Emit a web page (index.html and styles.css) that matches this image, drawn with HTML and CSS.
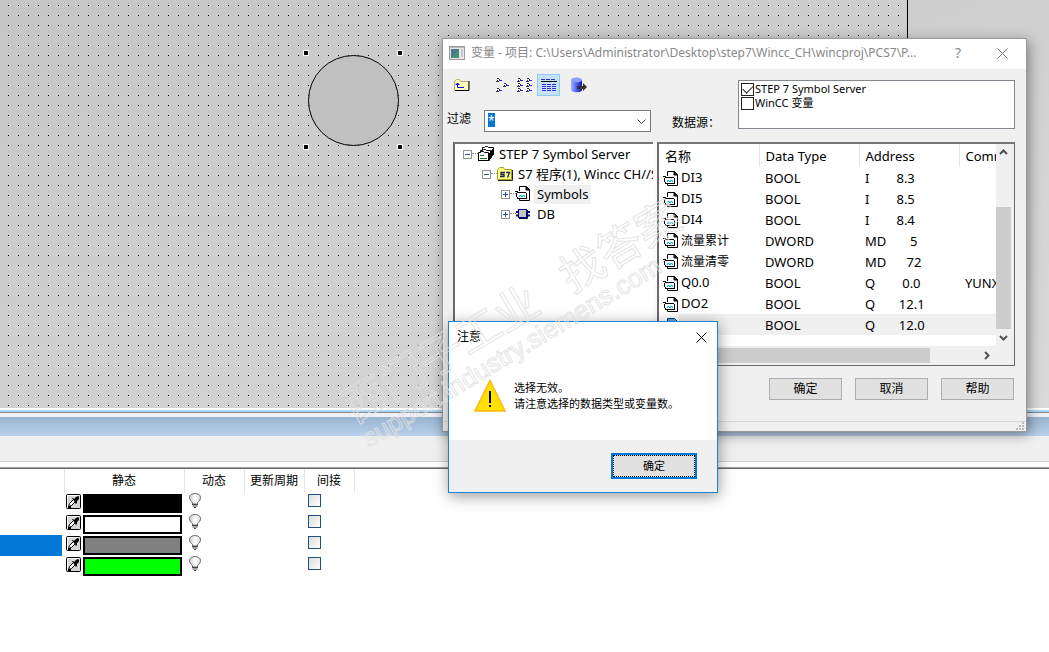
FILE: index.html
```html
<!DOCTYPE html>
<html lang="zh-CN">
<head>
<meta charset="utf-8">
<title>变量 - 项目</title>
<link rel="stylesheet" href="styles.css">
</head>
<body>
<svg class="defs" aria-hidden="true">
  <defs>
    <linearGradient id="bulb-fill" x1="0" x2="1"><stop offset="0" stop-color="#ccc"/><stop offset=".5" stop-color="#fff"/><stop offset="1" stop-color="#ddd"/></linearGradient>
    <linearGradient id="db-fill" x1="0" x2="1"><stop offset="0" stop-color="#a8b4ff"/><stop offset=".4" stop-color="#6070ff"/><stop offset="1" stop-color="#1010a0"/></linearGradient>
    <symbol id="doc" viewBox="0 0 16 16">
      <path d="M4.500 5V.5h7l3 3v11h-10V13" fill="#fff" stroke="#000"/>
      <path d="M11 .5v3.500h3.500z" fill="#333" stroke="#000"/>
      <path d="M1 5l2-1 1 2h7v6H4l-2-1z" fill="#fff"/>
      <path d="M0 5.500h2M2.500 5v1M2 6.500h9M11.500 7v5M3 12.500h9M1.500 7v4M2.500 11v2" fill="none" stroke="#000"/>
      <path d="M4.500 9.500h2M7.500 9.500h2M4 10.500h1M6 10.500h2M9 10.500h1" stroke="#00b0c0" fill="none"/>
    </symbol>
    <symbol id="picker" viewBox="0 0 15 15">
      <rect x=".5" y=".5" width="14" height="14" rx="1" fill="#d4d4d4" stroke="#000"/>
      <path d="M1.500 13V1.500H13" fill="none" stroke="#fff"/>
      <path d="M2.500 12.500l1-3 4-4 2 2-4 4z" fill="#fff" stroke="#000"/>
      <path d="M6 4h1l1 1 2-2 2-1 1 1v2l-2 2v2l-1 1z" fill="#000"/>
      <path d="M2 13h3" stroke="#000" stroke-width="2"/>
    </symbol>
    <symbol id="bulb" viewBox="0 0 14 16">
      <path d="M4.500 11V9.500C2.500 8 1.500 6.500 1.500 4.500 1.500 2 4 .6 7 .6s5.500 1.400 5.500 3.900c0 2-1 3.500-3 5V11z" fill="url(#bulb-fill)" stroke="#666"/>
      <path d="M4 11.500h6M4.500 13h5M6 14.500h2" stroke="#444" stroke-width="1.200"/>
    </symbol>
    <symbol id="branch" viewBox="0 0 6 5">
      <path d="M1 .5h2M3.500 1v2M0 3.500h3M1 2.500h1" stroke="#334" fill="none"/><path d="M4 2.500h2" stroke="#2020ff"/>
    </symbol>
    <symbol id="plus" viewBox="0 0 9 9">
      <rect x=".5" y=".5" width="8" height="8" fill="#fff" stroke="#919191"/><path d="M2 4.500h5M4.500 2v5" stroke="#2c4c9c"/>
    </symbol>
    <symbol id="minus" viewBox="0 0 9 9">
      <rect x=".5" y=".5" width="8" height="8" fill="#fff" stroke="#919191"/><path d="M2 4.500h5" stroke="#2c4c9c"/>
    </symbol>
  </defs>
</svg>

<main class="workspace">
  <section class="canvas" aria-label="画面">
    <div class="sheet"></div>
    <svg class="shape" viewBox="0 0 100 100">
      <circle cx="50.500" cy="50.500" r="45" fill="#c0c0c0" stroke="#000"/>
      <g fill="#000" stroke="#fff"><rect x=".5" y=".5" width="5" height="5"/><rect x="94.500" y=".5" width="5" height="5"/><rect x=".5" y="94.500" width="5" height="5"/><rect x="94.500" y="94.500" width="5" height="5"/></g>
    </svg>
  </section>
  <div class="frame-edge"></div>
  <div class="caption-bar"></div>
  <div class="property-bar"></div>
  <section class="properties">
    <table class="colors">
      <thead><tr><th class="c-name"></th><th class="c-static">静态</th><th class="c-dyn">动态</th><th class="c-cycle">更新周期</th><th class="c-ind">间接</th></tr></thead>
      <tbody>
        <tr><td></td><td><div class="static"><button class="pick" aria-label="选择颜色"><svg><use href="#picker"/></svg></button><span class="swatch black"></span></div></td><td><svg class="bulb"><use href="#bulb"/></svg></td><td></td><td><input class="tick" type="checkbox" aria-label="间接 1"></td></tr>
        <tr><td></td><td><div class="static"><button class="pick" aria-label="选择颜色"><svg><use href="#picker"/></svg></button><span class="swatch white"></span></div></td><td><svg class="bulb"><use href="#bulb"/></svg></td><td></td><td><input class="tick" type="checkbox" aria-label="间接 2"></td></tr>
        <tr><td><div class="selected-name"></div></td><td><div class="static"><button class="pick" aria-label="选择颜色"><svg><use href="#picker"/></svg></button><span class="swatch gray"></span></div></td><td><svg class="bulb"><use href="#bulb"/></svg></td><td></td><td><input class="tick" type="checkbox" aria-label="间接 3"></td></tr>
        <tr><td></td><td><div class="static"><button class="pick" aria-label="选择颜色"><svg><use href="#picker"/></svg></button><span class="swatch green"></span></div></td><td><svg class="bulb"><use href="#bulb"/></svg></td><td></td><td><input class="tick" type="checkbox" aria-label="间接 4"></td></tr>
      </tbody>
    </table>
  </section>
</main>

<section class="window" role="dialog" aria-labelledby="win-title">
  <header class="titlebar">
    <svg class="app-icon" viewBox="0 0 16 14"><rect x=".5" y=".5" width="15" height="13" fill="#e8e8e8" stroke="#999"/><path d="M1 1.500h14" stroke="#bbb"/><rect x="2" y="3" width="8" height="9" fill="#4c7890"/><path d="M2 12l8-9v9z" fill="#3f9078"/><path d="M12 4h2M12 6h2M12 8h2M12 10h2" stroke="#aaa"/></svg>
    <h1 id="win-title">变量 - 项目: C:\Users\Administrator\Desktop\step7\Wincc_CH\wincproj\PCS7\P...</h1>
    <button class="help" aria-label="帮助">?</button>
    <button class="close" aria-label="关闭"><svg viewBox="0 0 11 11"><path d="M.5 .5l10 10M10.500 .5l-10 10" stroke="#777"/></svg></button>
  </header>
  <div class="controls">
    <div class="left-controls">
      <div class="toolbar">
        <button aria-label="上一级"><svg viewBox="0 0 22 20"><path d="M3.500 15.500V6.500l2-2h3l1 2h8v9z" fill="#ffffc0" stroke="#c0b060"/><path d="M4 15.500h14V6" fill="none" stroke="#000"/><path d="M6.500 8v4.500H13M4.500 9.500h4M5.500 8.500h2" fill="none" stroke="#0000e0"/></svg></button>
        <button class="after-gap" aria-label="小图标"><svg viewBox="0 0 22 20"><use href="#branch" x="4" y="3" width="6" height="5"/><use href="#branch" x="11" y="8" width="6" height="5"/><use href="#branch" x="4" y="13" width="6" height="5"/></svg></button>
        <button aria-label="列表"><svg viewBox="0 0 22 20"><use href="#branch" x="2" y="3" width="6" height="5"/><use href="#branch" x="11" y="3" width="6" height="5"/><use href="#branch" x="2" y="8" width="6" height="5"/><use href="#branch" x="11" y="8" width="6" height="5"/><use href="#branch" x="2" y="13" width="6" height="5"/><use href="#branch" x="11" y="13" width="6" height="5"/></svg></button>
        <button class="pressed" aria-label="详细信息" aria-pressed="true"><svg viewBox="0 0 22 20"><path d="M3 4.500h15" stroke="#3030c0" stroke-dasharray="4 1"/><path d="M3 6.500h16" stroke="#000"/><path d="M4 9.500h15M4 11.500h15M4 13.500h15M4 15.500h15" stroke="#3030e0" stroke-dasharray="4 1"/></svg></button>
        <button class="after-db" aria-label="数据库"><svg viewBox="0 0 22 20"><path d="M3 5v10c0 3 11 3 11 0V5z" fill="url(#db-fill)"/><ellipse cx="8.500" cy="5" rx="5.500" ry="2.500" fill="#8c9cff"/><path d="M9 11h6V8l4 4-4 4v-2H9z" fill="#333"/></svg></button>
      </div>
      <div class="filter">
        <label for="filter">过滤</label>
        <div class="combo"><input id="filter" type="text" value="" aria-label="过滤"><span class="picked">*</span><svg viewBox="0 0 9 6"><path d="M.5 .5l4 4 4-4" fill="none" stroke="#444"/></svg></div>
      </div>
    </div>
    <span class="source-label" id="src">数据源：</span>
    <div class="sources" role="group" aria-labelledby="src">
      <label><input type="checkbox" checked>STEP 7 Symbol Server</label>
      <label><input type="checkbox">WinCC 变量</label>
    </div>
  </div>
  <div class="panes">
    <div class="pane tree">
      <ul>
        <li class="l1"><svg class="tog"><use href="#minus"/></svg><svg class="ico" viewBox="0 0 18 16"><path d="M5.500 5V1.500h2l1-1h2l1 1h5v7l-2 2" fill="#fff" stroke="#000"/><path d="M3.500 7V4.500h2l1-1h2l1 1h5v7l-2 2" fill="#fff" stroke="#000"/><path d="M1.500 14.500v-8h2l1-1h2l1 1h4v8z" fill="#fff" stroke="#000"/><path d="M1 14.500h11.500V7M13.500 12.500V5M15.500 10V3" stroke="#000" fill="none"/><path d="M3 12.500h7M3 9.500h4" stroke="#207030"/></svg><span>STEP 7 Symbol Server</span></li>
        <li class="l2"><svg class="tog"><use href="#minus"/></svg><svg class="ico" viewBox="0 0 18 16"><path d="M1.500 13.500v-10l2-2h4l1 2h7v10z" fill="#ffff80" stroke="#a8a030"/><path d="M2 14.500h14.500V4" fill="none" stroke="#222"/><path d="M4 10.500h4v-2H5v-2h4M10 6.500h3.500l-2 5" fill="none" stroke="#202060" stroke-width="1.300"/></svg><span>S7 程序(1), Wincc CH//S7</span></li>
        <li class="l3"><svg class="tog"><use href="#plus"/></svg><svg class="ico"><use href="#doc" x="0" width="16" height="16"/></svg><span class="hot">Symbols</span></li>
        <li class="l3"><svg class="tog"><use href="#plus"/></svg><svg class="ico" viewBox="0 0 18 16"><path d="M1 6h14M1 9.500h14" stroke="#000080" stroke-width="2"/><rect x="3.500" y="3.500" width="8" height="8" fill="#c4c4c4" stroke="#000080"/><path d="M4 12.500h8.500V4" fill="none" stroke="#000040"/></svg><span>DB</span></li>
      </ul>
    </div>
    <div class="pane list">
      <div class="rows">
        <table>
          <thead><tr><th class="n">名称</th><th>Data Type</th><th>Address</th><th class="last">Comment</th></tr></thead>
          <tbody>
            <tr><td class="n"><svg><use href="#doc"/></svg>DI3</td><td>BOOL</td><td>I        8.3</td><td></td></tr>
            <tr><td class="n"><svg><use href="#doc"/></svg>DI5</td><td>BOOL</td><td>I        8.5</td><td></td></tr>
            <tr><td class="n"><svg><use href="#doc"/></svg>DI4</td><td>BOOL</td><td>I        8.4</td><td></td></tr>
            <tr><td class="n cn"><svg><use href="#doc"/></svg>流量累计</td><td>DWORD</td><td>MD       5</td><td></td></tr>
            <tr><td class="n cn"><svg><use href="#doc"/></svg>流量清零</td><td>DWORD</td><td>MD      72</td><td></td></tr>
            <tr><td class="n"><svg><use href="#doc"/></svg>Q0.0</td><td>BOOL</td><td>Q        0.0</td><td>YUNX</td></tr>
            <tr><td class="n"><svg><use href="#doc"/></svg>DO2</td><td>BOOL</td><td>Q       12.1</td><td></td></tr>
            <tr class="current"><td class="n"><svg viewBox="0 0 16 16"><path d="M4.500 14V.5h7l3 3v11h-10" fill="#69a5d8" stroke="#004070"/></svg></td><td>BOOL</td><td>Q       12.0</td><td></td></tr>
          </tbody>
        </table>
      </div>
      <div class="vbar"><svg viewBox="0 0 15 16"><path d="M4 9.500L7.500 6l3.500 3.500" fill="none" stroke="#505050" stroke-width="2"/></svg><span class="thumb"></span><svg viewBox="0 0 15 16"><path d="M4 6.500L7.500 10 11 6.500" fill="none" stroke="#505050" stroke-width="2"/></svg></div>
      <div class="hbar"><span class="thumb"></span><svg viewBox="0 0 15 15"><path d="M6 4l3.500 3.500L6 11" fill="none" stroke="#505050" stroke-width="2"/></svg></div>
    </div>
  </div>
  <div class="actions"><button>确定</button><button>取消</button><button>帮助</button></div>
  <footer class="status"><svg viewBox="0 0 9 9"><path d="M6 0h2v2H6zM3 3h2v2H3zM6 3h2v2H6zM0 6h2v2H0zM3 6h2v2H3zM6 6h2v2H6z" fill="#bbb"/></svg></footer>
</section>

<section class="message" role="alertdialog" aria-labelledby="msg-title">
  <header><h2 id="msg-title">注意</h2><button aria-label="关闭"><svg viewBox="0 0 11 11"><path d="M.5 .5l10 10M10.500 .5l-10 10" stroke="#000"/></svg></button></header>
  <div class="msg-body">
    <svg viewBox="0 0 32 33"><path d="M16 1.500L31 32H1z" fill="#ffe000" stroke="#fdb813" stroke-width="1.500"/><path d="M15 12h2v12H15zM15 26h2v2H15z" fill="#000"/></svg>
    <p>选择无效。<br>请注意选择的数据类型或变量数。</p>
  </div>
  <footer><button>确定</button></footer>
</section>

<div class="watermark" aria-hidden="true">
  <div class="wm-cn"><span>西门子工业</span><span>找答案</span></div>
  <div class="wm-url">support.industry.siemens.com</div>
</div>
</body>
</html>
```

FILE: styles.css
```css
* { box-sizing: border-box; }
html, body { margin: 0; height: 100%; }
body {
  position: relative;
  overflow: hidden;
  background: #fff;
  color: #000;
  font: 12px/16px "Noto Sans", "Noto Sans CJK SC", sans-serif;
}
button { padding: 0; border: 0; background: none; color: inherit; font: inherit; }
svg { display: block; flex: none; }
h1, h2, p, ul { margin: 0; padding: 0; font: inherit; list-style: none; }
.defs { position: absolute; width: 0; height: 0; }

/* Drawing area and property table */
.workspace { display: flex; flex-direction: column; min-height: 100%; }
.canvas {
  position: relative;
  flex: 1;
  display: flex;
  background: linear-gradient(160deg, #c6c6c6, #dadada);
}
.sheet {
  width: 908px;
  border-right: 1px solid #000;
  background: conic-gradient(from 0deg at 1px 1px, transparent 75%, #000 0) 8px 5px / 10px 10px;
}
.shape { position: absolute; left: 303px; top: 50px; width: 100px; height: 100px; }
.frame-edge { height: 9px; background: linear-gradient(#fff 2px, #a9d6f5 2px 4px, #888 4px 5px, #f0f2fb 5px); }
.caption-bar { height: 19px; background: linear-gradient(#99b4d1, #b9d1ea); }
.property-bar { height: 26px; border-bottom: 1px solid #d0d0d0; background: #f0f0f0; }
.properties { padding: 5px 0 75px; background: linear-gradient(#fff 5px, #a0a0a0 5px 6px, #696969 6px 7px, #fff 7px); }
.colors { width: 354px; margin-top: 2px; table-layout: fixed; border-collapse: collapse; }
.colors th { height: 24px; padding: 0; border-right: 1px solid #e5e5e5; font-weight: 400; }
.colors td { height: 21px; padding: 0; vertical-align: top; }
.c-name { width: 64px; }
.c-static { width: 120px; }
.c-dyn, .c-cycle { width: 60px; }
.c-ind { width: 50px; }
.static { display: flex; gap: 2px; padding: 1px 2px; }
.pick, .pick svg { width: 15px; height: 15px; }
.swatch { width: 99px; height: 19px; border: 2px solid #000; }
.black { background: #000; }
.white { background: #fff; }
.gray { background: #808080; }
.green { background: #0f0; }
.selected-name { width: 62px; height: 21px; background: #0078d7; }
.bulb { width: 14px; height: 16px; margin-left: 4px; }
.tick { appearance: none; display: block; width: 13px; height: 13px; margin: 1px 4px; border: 1px solid #1c5180; background: linear-gradient(135deg, #dcdcd7, #fff); }

/* Variable selection window */
.window {
  position: absolute;
  left: 442px;
  top: 38px;
  width: 585px;
  border: 1px solid #999;
  background: #f0f0f0;
  box-shadow: 2px 3px 12px rgba(0, 0, 0, .4);
}
.titlebar { display: flex; align-items: center; height: 30px; padding: 0 18px 2px 6px; background: #fff; color: #888; }
.app-icon { width: 16px; height: 14px; margin-right: 6px; }
.titlebar h1 { flex: 1; white-space: nowrap; }
.help { width: 12px; font-size: 14px; }
.close { margin-left: 33px; }
.close svg { width: 11px; height: 11px; }
.controls { display: flex; padding: 5px 11px 0 4px; }
.left-controls { width: 204px; }
.toolbar { display: flex; padding-left: 3px; }
.toolbar button { width: 23px; height: 22px; border: 1px solid transparent; }
.toolbar svg { width: 22px; height: 20px; }
.toolbar .after-gap { margin-left: 18px; }
.toolbar .after-db { margin-left: 7px; }
.toolbar .pressed { border-color: #90c8f6; background: #c4e2fa; }
.filter { display: flex; align-items: center; gap: 13px; margin-top: 14px; }
.filter label { margin-top: -4px; }
.combo { position: relative; flex: 1; height: 22px; border: 1px solid #7a7a7a; background: #fff; }
.combo input { width: 100%; height: 20px; padding: 0; border: 0; background: none; outline: 0; }
.combo .picked { position: absolute; left: 3px; top: 2px; width: 7px; height: 14px; background: #0078d7; color: #fff; }
.combo svg { position: absolute; right: 4px; top: 8px; width: 9px; height: 6px; }
.source-label { width: 66px; margin: 41px 0 0 21px; white-space: nowrap; }
.sources { flex: 1; height: 49px; margin-top: 6px; padding: 1px 2px; border: 1px solid #828790; background: #fff; font-size: 11px; }
.sources label { display: flex; align-items: center; gap: 1px; height: 14px; }
.sources input { appearance: none; width: 13px; height: 13px; margin: 0; border: 1px solid #222; background: #fff; }
.sources input:checked::after { content: ""; display: block; width: 9px; height: 5px; margin: 1px; border: solid #222; border-width: 0 0 1px 1px; rotate: -45deg; }
.panes { display: flex; height: 224px; margin: 10px 11px 0 10px; background: #fafafa; font-size: 13px; }
.pane { overflow: hidden; border: 2px solid #696969; border-top-color: #777; background: #fff; }
.tree { width: 200px; margin-right: 4px; border-right: 0; border-bottom: 0; }
.tree li { position: relative; display: flex; align-items: center; height: 20px; white-space: nowrap; }
.tree li::before { content: ""; position: absolute; left: 17px; top: 9px; width: 6px; border-top: 1px dotted #888; }
.tree .l1 { padding-left: 8px; }
.tree .l2 { padding-left: 27px; }
.tree .l3 { padding-left: 46px; }
.tree .l2::before { left: 36px; }
.tree .l3::before { left: 55px; }
.tog { width: 9px; height: 9px; margin-right: 5px; }
.ico { width: 18px; height: 16px; margin-right: 1px; }
.tree span { padding: 0 3px; line-height: 19px; }
.hot { background: #f0f0f0; }
.list { flex: 1; display: grid; grid-template: 1fr 19px / 1fr 18px; border-width: 2px 1px 1px 2px; background: #f0f0f0; }
.rows { overflow: hidden; min-width: 0; background: #fff; }
.rows table { width: 400px; table-layout: fixed; border-collapse: collapse; }
.rows th { width: 100px; height: 23px; padding: 0 0 0 6px; border-right: 1px solid #e5e5e5; font-weight: 400; text-align: left; line-height: 18px; }
.rows td { height: 21px; padding: 0 0 0 6px; white-space: pre; line-height: 18px; }
.rows td.n { padding-left: 4px; }
.rows td.cn { font-size: 12px; }
.rows .n svg { display: inline-block; width: 16px; height: 16px; margin-right: 2px; vertical-align: middle; }
.current td { background: #f0f0f0; }
.rows .current .n { background: linear-gradient(90deg, #fff 20px, #f0f0f0 20px); }
.vbar { display: flex; flex-direction: column; width: 15px; background: #f0f0f0; }
.vbar svg { width: 15px; height: 17px; }
.vbar .thumb { height: 122px; margin-top: auto; background: #cdcdcd; }
.hbar { display: flex; height: 15px; margin-top: 2px; }
.hbar .thumb { width: 271px; background: #cdcdcd; }
.hbar svg { width: 15px; height: 15px; margin: 0 2px 0 auto; }
.actions { display: flex; justify-content: flex-end; gap: 13px; padding: 12px 12px 21px; }
.actions button { width: 73px; height: 22px; border: 1px solid #adadad; background: #e1e1e1; }
.status { display: flex; justify-content: flex-end; height: 10px; border-top: 1px solid #d7d7d7; }
.status svg { width: 9px; height: 9px; margin-right: 1px; }

/* Warning message */
.message {
  position: absolute;
  left: 448px;
  top: 321px;
  width: 270px;
  border: 1px solid #1883d7;
  background: #fff;
  box-shadow: 1px 3px 14px rgba(0, 0, 0, .4);
}
.message header { display: flex; align-items: center; justify-content: space-between; height: 30px; padding: 0 10px 0 8px; }
.message header svg { width: 11px; height: 11px; }
.msg-body { display: flex; align-items: flex-end; gap: 8px; padding: 27px 25px 28px; }
.msg-body svg { width: 32px; height: 33px; }
.msg-body p { font-size: 11px; line-height: 16px; white-space: nowrap; }
.message footer { display: flex; justify-content: flex-end; padding: 13px 20px; background: #f0f0f0; }
.message footer button { width: 86px; height: 26px; border: 2px solid #0078d7; background: #e1e1e1; outline: 1px dotted #000; outline-offset: -3px; font-size: 11px; }

/* Site watermark */
.watermark {
  position: absolute;
  left: 333px;
  top: 388px;
  color: transparent;
  white-space: nowrap;
  pointer-events: none;
  rotate: -31deg;
  transform-origin: 0 0;
  -webkit-text-stroke: 1px rgba(224, 224, 224, .85);
}
.wm-cn { display: flex; gap: 33px; font: 44px/46px "Noto Sans CJK SC", sans-serif; }
.wm-url { font: 26px/30px "Liberation Sans", sans-serif; }
```
